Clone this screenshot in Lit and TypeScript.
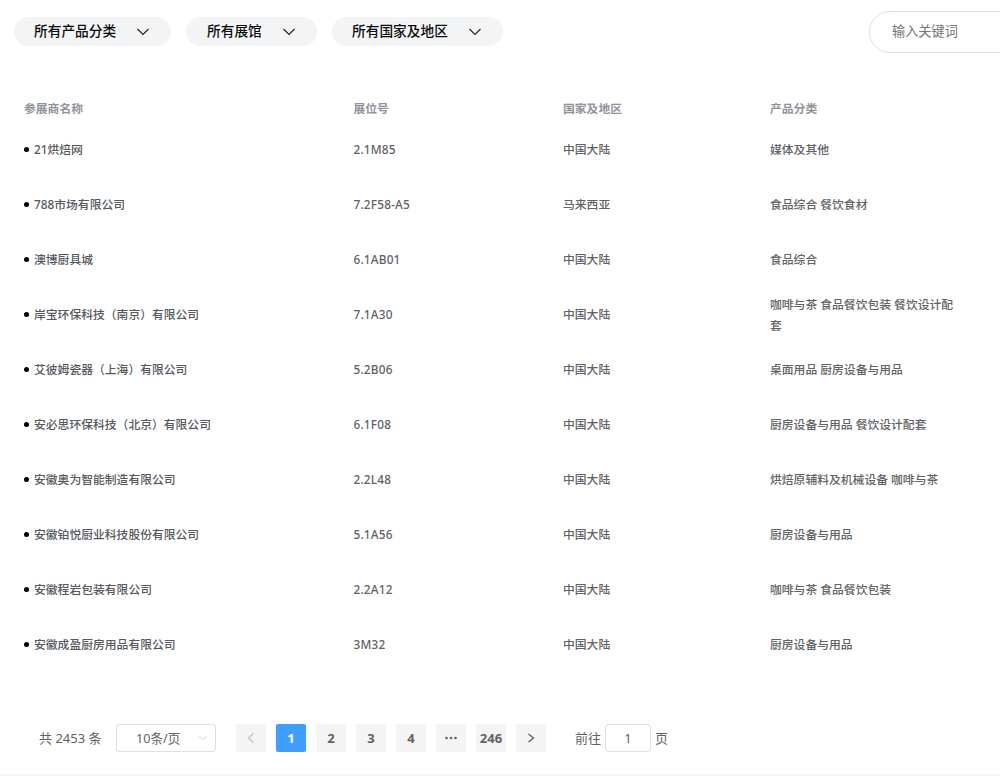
import { LitElement, html, css, svg } from "lit";
import { customElement } from "lit/decorators.js";

const rows: [string, string, string, string][] = [
  ["21烘焙网", "2.1M85", "中国大陆", "媒体及其他"],
  ["788市场有限公司", "7.2F58-A5", "马来西亚", "食品综合 餐饮食材"],
  ["澳博厨具城", "6.1AB01", "中国大陆", "食品综合"],
  ["岸宝环保科技（南京）有限公司", "7.1A30", "中国大陆", "咖啡与茶 食品餐饮包装 餐饮设计配套"],
  ["艾彼姆瓷器（上海）有限公司", "5.2B06", "中国大陆", "桌面用品 厨房设备与用品"],
  ["安必思环保科技（北京）有限公司", "6.1F08", "中国大陆", "厨房设备与用品 餐饮设计配套"],
  ["安徽奥为智能制造有限公司", "2.2L48", "中国大陆", "烘焙原辅料及机械设备 咖啡与茶"],
  ["安徽铂悦厨业科技股份有限公司", "5.1A56", "中国大陆", "厨房设备与用品"],
  ["安徽程岩包装有限公司", "2.2A12", "中国大陆", "咖啡与茶 食品餐饮包装"],
  ["安徽成盈厨房用品有限公司", "3M32", "中国大陆", "厨房设备与用品"],
];

const chevron = (w: number, color: string) => html`<svg width=${w} height=${w} viewBox="0 0 14 14" fill="none" stroke=${color} stroke-width="1.1"><path d="M1.5 4 L7 9.5 L12.5 4" /></svg>`;
const left = svg`<path d="M9.5 2.5 L4.5 7 L9.5 11.5" />`;
const right = svg`<path d="M4.5 3 L9.5 7 L4.5 11" />`;

@customElement("app-root")
export class AppRoot extends LitElement {
  static styles = css`
    :host { display: block; width: 1000px; height: 776px; overflow: hidden; background: #fff;
      font-family: "Noto Sans", "Noto Sans CJK SC", sans-serif; box-sizing: border-box; border-bottom: 2px solid #f5f5f5; }
    .filters { display: flex; align-items: flex-start; height: 53px; padding: 11px 0 0 14px; box-sizing: border-box; overflow: hidden; }
    .pill { display: flex; align-items: center; justify-content: space-between; height: 29px; margin-top: 6px; border-radius: 15px; background: #f3f4f6; color: #0b0b0b; font-size: 13.7px; line-height: 27px; padding-bottom: 2px; font-weight: 500; box-sizing: border-box; margin-right: 15px; }
    .pill svg { margin-top: 2px; }
    .p1 { width: 157px; padding-left: 20px; padding-right: 21px; }
    .p2 { width: 131px; padding-left: 21px; padding-right: 21px; }
    .p3 { width: 171px; padding-left: 20px; padding-right: 21px; }
    .search { margin-left: auto; width: 160px; height: 42px; margin-right: -29px; border: 1px solid #dcdfe6; border-radius: 21px; padding: 0 0 3px 22px; box-sizing: border-box; display: flex; align-items: center; font-size: 13.2px; color: #757575; flex: none; }
    .table { margin-top: 40px; padding-left: 24px; display: grid; grid-template-columns: 329.5px 209.5px 207px 184px; grid-template-rows: 29px; grid-auto-rows: 55px; font-size: 11.8px; font-weight: 500; color: #606266; }
    .cell { display: flex; align-items: center; line-height: 21px; }
    .head { color: #909399; font-weight: 700; padding-top: 1px; }
    .name { color: #55585d; }
    .booth { letter-spacing: 0.2px; }
    .name::before { content: ""; width: 5px; height: 5px; border-radius: 50%; background: #000; margin-right: 5px; flex: none; }
    .pager { display: flex; align-items: center; height: 30px; margin-top: 51px; padding-left: 39px; font-size: 13px; color: #606266; }
    .total { width: 77px; padding-bottom: 1px; }
    .size { width: 100px; height: 28px; border: 1px solid #dcdfe6; border-radius: 3px; box-sizing: border-box; display: flex; align-items: center; justify-content: space-between; padding: 0 7px 1px 19px; margin-right: 20px; color: #606266; font-size: 12.6px; }
    .num { width: 30px; height: 28px; background: #f4f4f5; border-radius: 2px; margin-right: 10px; display: flex; align-items: center; justify-content: center; font-weight: 700; color: #606266; }
    .num.on { background: #409eff; color: #fff; }
    .num svg { fill: none; stroke: currentColor; stroke-width: 1.4; }
    .num svg.dots { fill: currentColor; stroke: none; }
    .num.off { color: #c0c4cc; }
    .jump { display: flex; align-items: center; margin-left: 19px; }
    .jump span { padding-bottom: 1px; }
    .box { width: 46px; height: 28px; border: 1px solid #dcdfe6; border-radius: 4px; box-sizing: border-box; margin: 0 4px 0 4px; display: flex; align-items: center; justify-content: center; }
  `;

  render() {
    return html`
      <div class="filters">
        <div class="pill p1"><span>所有产品分类</span>${chevron(14, "#222")}</div>
        <div class="pill p2"><span>所有展馆</span>${chevron(14, "#222")}</div>
        <div class="pill p3"><span>所有国家及地区</span>${chevron(14, "#222")}</div>
        <div class="search">输入关键词</div>
      </div>
      <div class="table">
        <div class="cell head">参展商名称</div>
        <div class="cell head">展位号</div>
        <div class="cell head">国家及地区</div>
        <div class="cell head">产品分类</div>
        ${rows.map(
          (r) => html`
            <div class="cell name">${r[0]}</div>
            <div class="cell booth">${r[1]}</div>
            <div class="cell">${r[2]}</div>
            <div class="cell">${r[3]}</div>
          `
        )}
      </div>
      <div class="pager">
        <span class="total">共 2453 条</span>
        <div class="size"><span>10条/页</span>${chevron(10, "#c0c4cc")}</div>
        <div class="num off"><svg width="14" height="14" viewBox="0 0 14 14">${left}</svg></div>
        <div class="num on">1</div>
        <div class="num">2</div>
        <div class="num">3</div>
        <div class="num">4</div>
        <div class="num"><svg class="dots" width="14" height="14" viewBox="0 0 14 14"><circle cx="2.5" cy="7" r="1.3"/><circle cx="7" cy="7" r="1.3"/><circle cx="11.5" cy="7" r="1.3"/></svg></div>
        <div class="num">246</div>
        <div class="num"><svg width="14" height="14" viewBox="0 0 14 14">${right}</svg></div>
        <div class="jump"><span>前往</span><div class="box">1</div><span>页</span></div>
      </div>
    `;
  }
}
